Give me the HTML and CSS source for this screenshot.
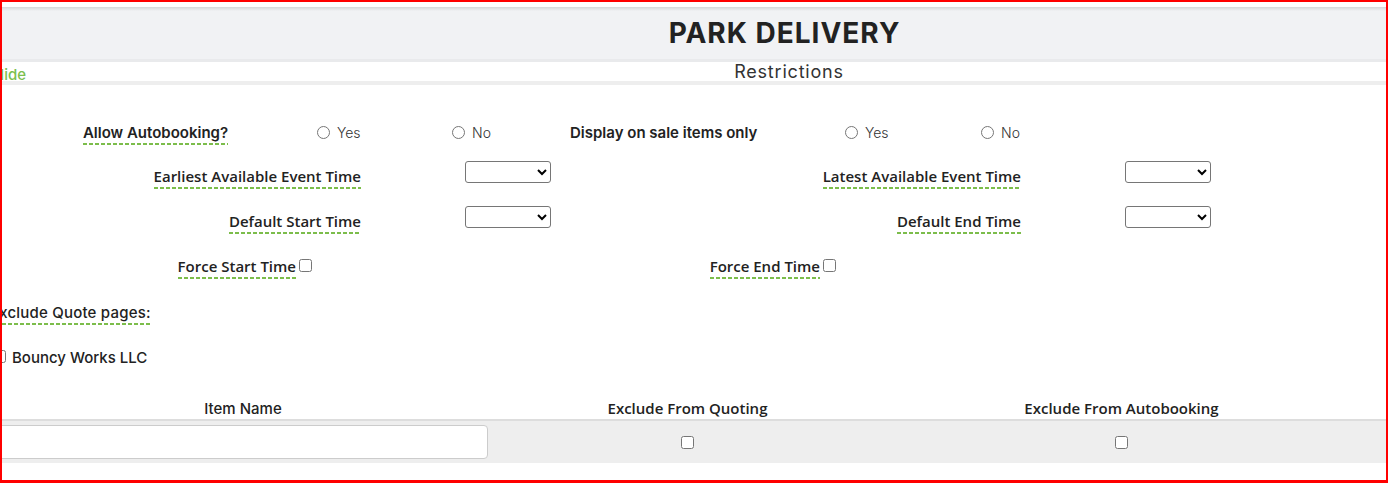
FILE: index.html
```html
<!DOCTYPE html>
<html lang="en">
<head>
  <meta charset="UTF-8">
  <meta name="viewport" content="width=device-width, initial-scale=1.0">
  <title>Park Delivery</title>
  <link rel="stylesheet" href="styles.css">
</head>
<body>
  <div class="frame">
    <div class="page">
      <header class="title-bar">
        <h1>PARK DELIVERY</h1>
      </header>

      <div class="section-bar">
        <a class="toggle" href="#">Hide</a>
        <h2>Restrictions</h2>
        <span></span>
      </div>

      <form class="restrictions">
        <div class="row row-radios">
          <div class="cell-center"><span class="tip">Allow Autobooking?</span></div>
          <label class="opt"><input type="radio" name="autobook"> Yes</label>
          <label class="opt"><input type="radio" name="autobook"> No</label>
          <div class="plain">Display on sale items only</div>
          <label class="opt"><input type="radio" name="onsale"> Yes</label>
          <label class="opt"><input type="radio" name="onsale"> No</label>
        </div>

        <div class="row row-times">
          <div class="field-label"><span class="tip">Earliest Available Event Time</span></div>
          <div class="field"><select></select></div>
          <div class="field-label"><span class="tip">Latest Available Event Time</span></div>
          <div class="field"><select></select></div>
        </div>

        <div class="row row-times">
          <div class="field-label"><span class="tip">Default Start Time</span></div>
          <div class="field"><select></select></div>
          <div class="field-label"><span class="tip">Default End Time</span></div>
          <div class="field"><select></select></div>
        </div>

        <div class="row row-force">
          <div class="field-label"><span class="tip">Force Start Time</span><input type="checkbox" class="inline-check"></div>
          <div class="field-label"><span class="tip">Force End Time</span><input type="checkbox" class="inline-check"></div>
        </div>

        <div class="row">
          <div class="heading"><span class="tip">Exclude Quote pages:</span></div>
        </div>

        <div class="row">
          <label class="page-opt"><input type="checkbox">Bouncy Works LLC</label>
        </div>
      </form>

      <table class="items">
        <colgroup>
          <col class="col-name">
          <col class="col-quote">
          <col class="col-auto">
          <col>
        </colgroup>
        <thead>
          <tr>
            <th class="th-name">Item Name</th>
            <th>Exclude From Quoting</th>
            <th>Exclude From Autobooking</th>
            <th></th>
          </tr>
        </thead>
        <tbody>
          <tr>
            <td class="td-name"><input type="text" class="name-input"></td>
            <td><input type="checkbox"></td>
            <td><input type="checkbox"></td>
            <td></td>
          </tr>
        </tbody>
      </table>
    </div>
  </div>
</body>
</html>
```

FILE: styles.css
```css
body {
  margin: 0;
  overflow: hidden;
  font-family: "Inter", "Open Sans", sans-serif;
  color: #222;
  background: white;
}
.frame {
  width: 1388px;
  height: 483px;
  box-sizing: border-box;
  border: 2px solid #ff0000;
  border-bottom-width: 3px;
  overflow: hidden;
}
.page {
  width: 1594px;
  margin-left: -12px;
}
.title-bar {
  margin-top: 5px;
  height: 52px;
  background: linear-gradient(#d6d7d9, #f1f2f4 4px);
  border-bottom: 3px solid #e9eaec;
  display: flex;
  align-items: center;
  justify-content: center;
}
.title-bar h1 {
  margin: 0 5px 0 0;
  font-size: 28px;
  font-weight: 700;
  letter-spacing: 1px;
  color: #222;
}
.section-bar {
  height: 19px;
  border-bottom: 4px solid #eeeeee;
  display: grid;
  grid-template-columns: 1fr auto 1fr;
  align-items: center;
}
.section-bar h2 {
  margin: 0 0 4px 4px;
  font-size: 18px;
  font-weight: 400;
  line-height: 19px;
  color: #333;
  letter-spacing: 0.8px;
}
.toggle {
  margin: 1px 0 0 3px;
  font-size: 15px;
  font-weight: 500;
  color: #7cc04f;
  text-decoration: none;
}
.restrictions {
  padding-top: 25px;
}
.row {
  height: 45px;
  display: grid;
  align-items: center;
  font-size: 15px;
}
.tip {
  padding-bottom: 3px;
  background: repeating-linear-gradient(to right, #7cbd4b 0 4px, transparent 4px 6px) left bottom / 100% 2px no-repeat;
}
.row-radios {
  grid-template-columns: 327px 135px 118px 275px 136px auto;
  font-weight: 600;
}
.cell-center {
  text-align: center;
  padding-left: 4px;
}
.opt {
  display: inline-flex;
  align-items: center;
  gap: 7px;
  font-size: 14px;
  font-weight: 300;
  color: #333;
}
.opt input {
  margin: 0;
  width: 13px;
  height: 13px;
}
.row-times {
  grid-template-columns: 371px 190px 470px 190px;
}
.field-label {
  margin-bottom: 3px;
  text-align: right;
  font-family: "Open Sans", sans-serif;
  font-weight: 600;
}
.field {
  align-self: start;
  margin-top: 6px;
  padding-left: 104px;
}
.field select {
  width: 86px;
  height: 22px;
  margin: 0;
  background: white;
  border: 1px solid #767676;
  border-radius: 3px;
}
.row-force {
  grid-template-columns: 322px 524px;
}
.inline-check {
  margin: 0 0 0 3px;
  width: 13px;
  height: 13px;
}
.heading {
  font-weight: 500;
  letter-spacing: 0.2px;
}
.page-opt {
  font-weight: 500;
}
.page-opt input {
  margin: 0 6px 0 3px;
  width: 13px;
  height: 13px;
}
.items {
  margin-top: 18px;
  width: 1400px;
  border-collapse: collapse;
  table-layout: fixed;
}
.col-name {
  width: 506px;
}
.col-quote {
  width: 383px;
}
.col-auto {
  width: 485px;
}
.items th {
  height: 21px;
  padding: 0;
  line-height: 21px;
  font-family: "Open Sans", sans-serif;
  font-size: 15px;
  font-weight: 600;
  border-bottom: 2px solid #dddddd;
}
.items th.th-name {
  font-family: "Inter", sans-serif;
  font-weight: 500;
}
.items td {
  background: #eeeeee;
  padding: 4px 8px;
  text-align: center;
  vertical-align: middle;
}
.items td input[type="checkbox"] {
  margin: 0 0 2px;
  width: 13px;
  height: 13px;
  vertical-align: middle;
}
.name-input {
  display: block;
  box-sizing: border-box;
  width: 100%;
  height: 34px;
  border: 1px solid #cccccc;
  border-radius: 4px;
  background: white;
}
```
